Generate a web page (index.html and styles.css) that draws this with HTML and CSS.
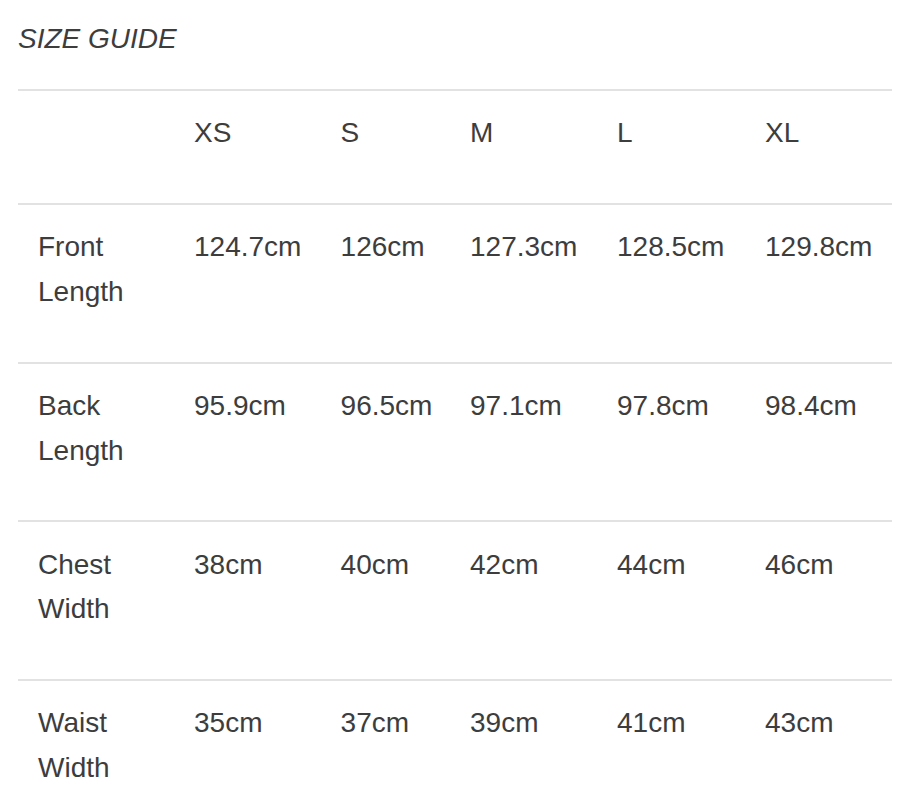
FILE: index.html
```html
<!DOCTYPE html>
<html lang="en">
<head>
<meta charset="utf-8">
<title>Size Guide</title>
<link rel="stylesheet" href="styles.css">
</head>
<body>
<main class="page">
  <h2 class="title">SIZE GUIDE</h2>
  <div class="sizes">
    <div class="row">
      <div class="cell"></div>
      <div class="cell">XS</div>
      <div class="cell">S</div>
      <div class="cell">M</div>
      <div class="cell">L</div>
      <div class="cell">XL</div>
    </div>
    <div class="row">
      <div class="cell label">Front Length</div>
      <div class="cell">124.7cm</div>
      <div class="cell">126cm</div>
      <div class="cell">127.3cm</div>
      <div class="cell">128.5cm</div>
      <div class="cell">129.8cm</div>
    </div>
    <div class="row">
      <div class="cell label">Back Length</div>
      <div class="cell">95.9cm</div>
      <div class="cell">96.5cm</div>
      <div class="cell">97.1cm</div>
      <div class="cell">97.8cm</div>
      <div class="cell">98.4cm</div>
    </div>
    <div class="row">
      <div class="cell label">Chest Width</div>
      <div class="cell">38cm</div>
      <div class="cell">40cm</div>
      <div class="cell">42cm</div>
      <div class="cell">44cm</div>
      <div class="cell">46cm</div>
    </div>
    <div class="row">
      <div class="cell label">Waist Width</div>
      <div class="cell">35cm</div>
      <div class="cell">37cm</div>
      <div class="cell">39cm</div>
      <div class="cell">41cm</div>
      <div class="cell">43cm</div>
    </div>
  </div>
</main>
</body>
</html>
```

FILE: styles.css
```css
html, body {
  margin: 0;
  padding: 0;
  background: #ffffff;
}

body {
  font-family: "Liberation Sans", Arial, Helvetica, sans-serif;
  font-size: 28px;
  line-height: 1.6;
  color: #3d3d3d;
}

.page {
  width: 874px;
  margin-left: 18px;
  padding-top: 17px;
}

.title {
  margin: 0 0 27px 0;
  font-size: 28px;
  font-weight: normal;
  font-style: italic;
  line-height: 1.6;
}

.sizes {
  display: flex;
  flex-direction: column;
}

.row {
  display: grid;
  grid-template-columns: 156px 146.6px 129.4px 147px 148px 147px;
  border-top: 2px solid #e2e2e2;
}

.cell {
  padding: 20.2px 0 47px 20px;
  white-space: nowrap;
}

.cell.label {
  white-space: normal;
  padding-right: 20px;
}
```
